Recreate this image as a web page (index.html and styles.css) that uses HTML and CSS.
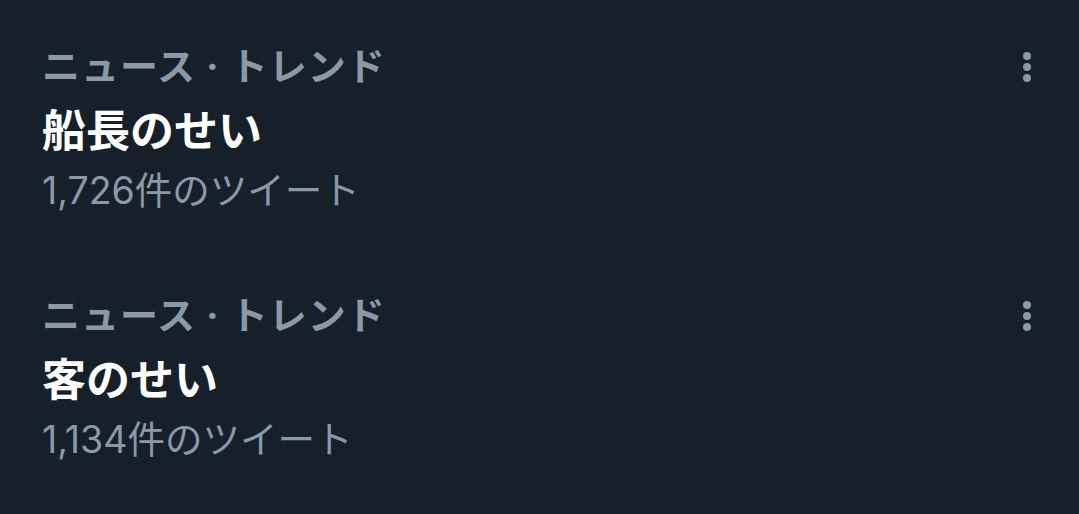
FILE: index.html
```html
<!DOCTYPE html>
<html lang="ja">
  <head>
    <meta charset="UTF-8" />
    <title>トレンド</title>
    <link rel="stylesheet" href="styles.css">
  </head>
  <body>
    <div id="trend-list">
      <div class="trend">
        <div class="trend-body">
          <div class="trend-category">ニュース · トレンド</div>
          <div class="trend-title">船長のせい</div>
          <div class="trend-count">1,726件のツイート</div>
        </div>
        <div class="trend-more">
          <svg viewBox="0 0 10 30" width="10" height="30"><circle cx="5" cy="4" r="4"/><circle cx="5" cy="15" r="4"/><circle cx="5" cy="26" r="4"/></svg>
        </div>
      </div>
      <div class="trend">
        <div class="trend-body">
          <div class="trend-category">ニュース · トレンド</div>
          <div class="trend-title">客のせい</div>
          <div class="trend-count">1,134件のツイート</div>
        </div>
        <div class="trend-more">
          <svg viewBox="0 0 10 30" width="10" height="30"><circle cx="5" cy="4" r="4"/><circle cx="5" cy="15" r="4"/><circle cx="5" cy="26" r="4"/></svg>
        </div>
      </div>
    </div>
  </body>
</html>
```

FILE: styles.css
```css
body {
  margin: 0;
  background-color: #15202b;
  font-family: Inter, "Noto Sans CJK JP", sans-serif;
}
#trend-list {
  display: flex;
  flex-direction: column;
}
.trend {
  display: flex;
  justify-content: space-between;
  padding: 36px 0 33px 42px;
}
.trend-category {
  color: #8b98a5;
  font-size: 38px;
  font-weight: 700;
  letter-spacing: 1px;
  line-height: 60px;
}
.trend-title {
  color: #ffffff;
  font-size: 44px;
  font-weight: 700;
  line-height: 70px;
}
.trend-count {
  color: #8b98a5;
  font-size: 37.5px;
  line-height: 50px;
}
.trend-more {
  padding: 16px 47px 0 0;
}
.trend-more svg {
  fill: #8b98a5;
  display: block;
}
```
